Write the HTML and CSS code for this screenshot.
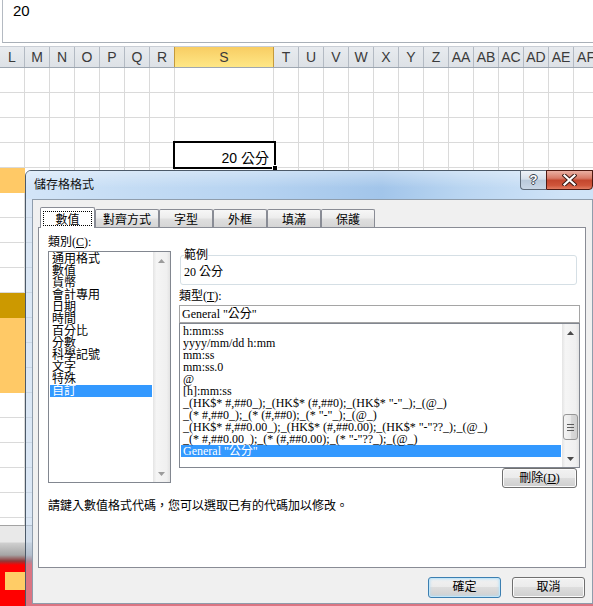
FILE: index.html
```html
<!DOCTYPE html>
<html lang="zh-TW">
<head>
    <meta charset="UTF-8">
    <meta name="viewport" content="width=device-width, initial-scale=1.0">
    <title>儲存格格式</title>
    <link rel="stylesheet" href="styles.css">
</head>
<body>
    <div class="formula-bar">20</div>

    <div class="col-heads">
        <div class="col-head">L</div>
        <div class="col-head">M</div>
        <div class="col-head">N</div>
        <div class="col-head">O</div>
        <div class="col-head">P</div>
        <div class="col-head">Q</div>
        <div class="col-head">R</div>
        <div class="col-head col-head-sel">S</div>
        <div class="col-head">T</div>
        <div class="col-head">U</div>
        <div class="col-head">V</div>
        <div class="col-head">W</div>
        <div class="col-head">X</div>
        <div class="col-head">Y</div>
        <div class="col-head">Z</div>
        <div class="col-head">AA</div>
        <div class="col-head">AB</div>
        <div class="col-head">AC</div>
        <div class="col-head">AD</div>
        <div class="col-head">AE</div>
        <div class="col-head">AF</div>
    </div>

    <div class="grid">
        <div class="col col-first">
            <div class="cell"></div>
            <div class="cell"></div>
            <div class="cell"></div>
            <div class="cell"></div>
            <div class="cell cell-orange"></div>
            <div class="cell"></div>
            <div class="cell"></div>
            <div class="cell"></div>
            <div class="cell"></div>
            <div class="cell cell-gold"></div>
            <div class="cell cell-orange"></div>
            <div class="cell cell-orange"></div>
            <div class="cell cell-orange"></div>
            <div class="cell"></div>
            <div class="cell"></div>
            <div class="cell"></div>
            <div class="cell"></div>
            <div class="cell"></div>
            <div class="cell"></div>
        </div>
        <div class="col"></div>
        <div class="col"></div>
        <div class="col"></div>
        <div class="col"></div>
        <div class="col"></div>
        <div class="col"></div>
        <div class="col col-wide"></div>
        <div class="col"></div>
        <div class="col"></div>
        <div class="col"></div>
        <div class="col"></div>
        <div class="col"></div>
        <div class="col"></div>
        <div class="col"></div>
        <div class="col"></div>
        <div class="col"></div>
        <div class="col"></div>
        <div class="col"></div>
        <div class="col"></div>
        <div class="col"></div>
    </div>

    <div class="sheet-foot">
        <div class="foot-cell"></div>
    </div>

    <div class="active-cell">20 公分<span class="fill-handle"></span></div>

    <div class="dialog">
        <div class="dialog-title">
            <span class="dialog-caption">儲存格格式</span>
            <div class="caption-btns">
                <span class="caption-btn caption-help">?</span>
                <span class="caption-btn caption-close">
                    <svg width="15" height="12" viewBox="0 0 15 12">
                        <path d="M2.5 1.5 L12.5 10.5 M12.5 1.5 L2.5 10.5" stroke="#3b1a14" stroke-width="4.2" stroke-linecap="square"/>
                        <path d="M2.5 1.5 L12.5 10.5 M12.5 1.5 L2.5 10.5" stroke="#fff" stroke-width="2.2" stroke-linecap="square"/>
                    </svg>
                </span>
            </div>
        </div>

        <div class="dialog-body">
            <div class="tabs">
                <div class="tab tab-active"><span class="focus-ring">數值</span></div>
                <div class="tab tab-wide">對齊方式</div>
                <div class="tab">字型</div>
                <div class="tab">外框</div>
                <div class="tab">填滿</div>
                <div class="tab">保護</div>
            </div>

            <div class="panel">
                <div class="panel-cols">
                    <div class="cat-col">
                        <div class="label">類別(<u>C</u>):</div>
                        <div class="listbox cat-list">
                            <ul class="list-items">
                                <li>通用格式</li>
                                <li>數值</li>
                                <li>貨幣</li>
                                <li>會計專用</li>
                                <li>日期</li>
                                <li>時間</li>
                                <li>百分比</li>
                                <li>分數</li>
                                <li>科學記號</li>
                                <li>文字</li>
                                <li>特殊</li>
                                <li class="is-selected">自訂</li>
                            </ul>
                            <div class="scrollbar scrollbar-off">
                                <span class="sb-arrow">
                                    <svg width="7" height="4" viewBox="0 0 7 4"><path d="M0 4 L3.5 0 L7 4z" fill="#9c9c9c"/></svg>
                                </span>
                                <span class="sb-arrow">
                                    <svg width="7" height="4" viewBox="0 0 7 4"><path d="M0 0 L3.5 4 L7 0z" fill="#9c9c9c"/></svg>
                                </span>
                            </div>
                        </div>
                    </div>

                    <div class="type-col">
                        <fieldset class="sample">
                            <legend>範例</legend>
                            <div class="sample-value">20 公分</div>
                        </fieldset>
                        <div class="label label-type">類型(<u>T</u>):</div>
                        <div class="type-input">General "公分"</div>
                        <div class="listbox type-list">
                            <ul class="list-items">
                                <li>h:mm:ss</li>
                                <li>yyyy/mm/dd h:mm</li>
                                <li>mm:ss</li>
                                <li>mm:ss.0</li>
                                <li>@</li>
                                <li>[h]:mm:ss</li>
                                <li>_(HK$* #,##0_);_(HK$* (#,##0);_(HK$* "-"_);_(@_)</li>
                                <li>_(* #,##0_);_(* (#,##0);_(* "-"_);_(@_)</li>
                                <li>_(HK$* #,##0.00_);_(HK$* (#,##0.00);_(HK$* "-"??_);_(@_)</li>
                                <li>_(* #,##0.00_);_(* (#,##0.00);_(* "-"??_);_(@_)</li>
                                <li class="is-selected">General "公分"</li>
                            </ul>
                            <div class="scrollbar">
                                <span class="sb-arrow">
                                    <svg width="7" height="4" viewBox="0 0 7 4"><path d="M0 4 L3.5 0 L7 4z" fill="#4a4a4a"/></svg>
                                </span>
                                <span class="sb-thumb">
                                    <svg width="8" height="7" viewBox="0 0 8 7">
                                        <path d="M0 0.5 H7 M0 3.5 H7 M0 6.5 H7" stroke="#5c5c5c" stroke-width="1"/>
                                    </svg>
                                </span>
                                <span class="sb-arrow">
                                    <svg width="7" height="4" viewBox="0 0 7 4"><path d="M0 0 L3.5 4 L7 0z" fill="#4a4a4a"/></svg>
                                </span>
                            </div>
                        </div>
                        <button class="btn btn-delete">刪除(<u>D</u>)</button>
                    </div>
                </div>
                <p class="hint">請鍵入數值格式代碼，您可以選取已有的代碼加以修改。</p>
            </div>

            <div class="dialog-buttons">
                <button class="btn btn-default">確定</button>
                <button class="btn">取消</button>
            </div>
        </div>
    </div>
</body>
</html>
```

FILE: styles.css
```css
* {
    box-sizing: border-box;
}
body {
    margin: 0;
    width: 593px;
    height: 606px;
    overflow: hidden;
    position: relative;
    background: #fff;
    font-family: "Liberation Sans", "Noto Sans CJK TC", sans-serif;
}

/* sheet */
.formula-bar {
    height: 43px;
    margin-left: 2px;
    padding: 2px 0 0 10px;
    border-left: 1px solid #b4bac2;
    border-bottom: 1px solid #a9b0b8;
    font-size: 15px;
    line-height: 18px;
    color: #000;
}
.col-heads {
    display: flex;
    height: 22px;
    margin-top: 3px;
    overflow: hidden;
    border-top: 1px solid #c9ced5;
    border-bottom: 1px solid #9ea7b1;
    background: linear-gradient(#e8ebef, #dde1e6);
}
.col-head {
    flex: none;
    width: 25px;
    height: 20px;
    border-right: 1px solid #b3bac3;
    text-align: center;
    font-size: 14px;
    line-height: 21px;
    color: #3b3b3b;
}
.col-head-sel {
    width: 99px;
    border-right-color: #c49a3c;
    box-shadow: -1px 0 0 #c49a3c;
    background: linear-gradient(#f8cd63, #fee786);
}
.grid {
    display: flex;
    height: 457px;
    overflow: hidden;
}
.col {
    flex: none;
    width: 25px;
    border-right: 1px solid #dadada;
    background: repeating-linear-gradient(#fff 0 24px, #dadada 24px 25px);
}
.col-wide {
    width: 99px;
}
.col-first {
    border-right: 0;
    background: none;
}
.cell {
    height: 25px;
    border-right: 1px solid #dadada;
    border-bottom: 1px solid #dadada;
}
.cell-orange {
    background: #ffc966;
    border-color: #ffc966;
}
.cell-gold {
    background: #cc9900;
    border-color: #cc9900;
}
.sheet-foot {
    height: 81px;
    padding: 47px 0 0 5px;
    background: linear-gradient(#a3a3a3 0 1px, #e9e9e9 1px 17px, #cfcfcf 18px, #a6a6a6 30px, #8e3a3a 36px, #ff0000 40px);
}
.foot-cell {
    width: 20px;
    height: 18px;
    background: #ffcc66;
}
.active-cell {
    position: absolute;
    left: 173px;
    top: 141px;
    width: 103px;
    height: 28px;
    border: 2px solid #000;
    padding: 6px 5px 0 0;
    background: #fff;
    text-align: right;
    font-size: 14px;
    line-height: 18px;
    color: #000;
}
.fill-handle {
    position: absolute;
    right: -4px;
    bottom: -4px;
    width: 6px;
    height: 6px;
    background: #000;
    border: 1px solid #fff;
}

/* dialog */
.dialog {
    position: absolute;
    left: 25px;
    top: 170px;
    width: 575px;
    height: 441px;
    padding: 0 6px 6px;
    border: 1px solid #4c5a69;
    border-radius: 6px 6px 0 0;
    background: rgba(190, 212, 236, 0.55);
    font-family: "Liberation Serif", "Noto Sans CJK TC", serif;
    font-size: 12px;
    color: #000;
}
.dialog-title {
    display: flex;
    align-items: flex-start;
    height: 28px;
    margin: 0 -6px;
    padding-left: 8px;
    border-radius: 5px 5px 0 0;
    background:
        linear-gradient(rgba(255, 255, 255, 0.35), rgba(255, 255, 255, 0) 60%),
        linear-gradient(90deg, #d3e5f8 0%, #c4dcf4 18%, #b6d3f1 40%, #a2c5ea 62%, #b9d5f1 76%, #cfe3f7 94%);
}
.dialog-caption {
    margin-top: 6px;
    line-height: 14px;
    font-family: "Noto Sans CJK TC", sans-serif;
    color: #111;
}
.caption-btns {
    display: flex;
    margin: -1px 6px 0 auto;
}
.caption-btn {
    display: flex;
    align-items: center;
    justify-content: center;
    height: 20px;
}
.caption-help {
    width: 26px;
    border: 1px solid #5e6b79;
    border-right: 0;
    border-radius: 0 0 0 4px;
    background: linear-gradient(#eef2f7, #d5dfea 45%, #b9c9da 52%, #c9d7e6);
    font: bold 13px/18px "Liberation Sans", sans-serif;
    color: #fff;
    text-shadow: 1px 0 0 #3a4450, -1px 0 0 #3a4450, 0 1px 0 #3a4450, 0 -1px 0 #3a4450;
}
.caption-close {
    width: 47px;
    border: 1px solid #4e1a12;
    border-radius: 0 0 4px 0;
    background: linear-gradient(#eab0a3, #d87b68 40%, #c4472e 52%, #cf553a 80%, #e27d62);
}
.dialog-body {
    height: 405px;
    padding: 7px 7px 0 5px;
    border: 1px solid #8f9dac;
    background: #f0f0f0;
}

/* tabs */
.tabs {
    display: flex;
    align-items: flex-end;
    height: 20px;
    padding-left: 2px;
    position: relative;
    z-index: 1;
    font-family: "Noto Sans CJK TC", sans-serif;
}
.tab {
    height: 18px;
    padding: 0 14px;
    border: 1px solid #898c95;
    border-bottom: 0;
    border-radius: 2px 2px 0 0;
    background: linear-gradient(#f7f7f7, #ededed 45%, #dfdfdf 55%, #d5d5d5);
    line-height: 17px;
}
.tab-wide {
    padding: 0 7px;
}
.tab-active {
    display: flex;
    justify-content: center;
    align-items: flex-start;
    width: 55px;
    height: 21px;
    margin-bottom: -1px;
    padding: 3px 0 0;
    background: #fff;
}
.focus-ring {
    padding: 0 11px;
    border: 1px dotted #000;
    line-height: 13px;
}
.panel {
    width: 548px;
    height: 341px;
    padding: 8px 0 0 9px;
    border: 1px solid #898c95;
    background: #fff;
}
.panel-cols {
    display: flex;
    align-items: flex-start;
    gap: 8px;
}
.cat-col {
    width: 123px;
}
.label {
    line-height: 12px;
}
.listbox {
    display: flex;
    border: 1px solid #828790;
    background: #fff;
}
.cat-list {
    height: 232px;
    margin-top: 3px;
}
.list-items {
    flex: 1;
    min-width: 0;
    margin: 0;
    padding: 1px;
    list-style: none;
    overflow: hidden;
}
.list-items li {
    height: 12px;
    padding-left: 2px;
    line-height: 12px;
    white-space: nowrap;
}
.list-items .is-selected {
    background: #3399ff;
    color: #fff;
}
.scrollbar {
    flex: none;
    display: flex;
    flex-direction: column;
    justify-content: space-between;
    width: 17px;
    background: linear-gradient(90deg, #e4e4e4, #f5f5f5 20%, #f0f0f0 80%, #e3e3e3);
}
.sb-arrow {
    display: flex;
    align-items: center;
    justify-content: center;
    height: 17px;
}
.sb-thumb {
    display: flex;
    align-items: center;
    justify-content: center;
    height: 26px;
    margin: auto 1px 10px;
    border: 1px solid #969696;
    border-radius: 3px;
    background: linear-gradient(90deg, #f4f4f4, #e9e9e9 50%, #dadada 52%, #d0d0d0);
}

.type-col {
    display: flex;
    flex-direction: column;
    width: 401px;
}
.sample {
    min-width: 0;
    margin: 13px 3px 0 1px;
    padding: 5px 3px 6px;
    border: 1px solid #d5dfe5;
    border-radius: 3px;
}
.sample legend {
    padding: 0;
    line-height: 12px;
}
.sample-value {
    line-height: 12px;
}
.label-type {
    margin-top: 5px;
}
.type-input {
    height: 18px;
    margin-top: 3px;
    padding-left: 2px;
    border: 1px solid #a5a5a5;
    line-height: 16px;
}
.type-list {
    height: 145px;
}
.hint {
    margin: 12px 0 0;
    line-height: 12px;
}

/* buttons */
.btn {
    width: 73px;
    height: 21px;
    padding: 0;
    border: 1px solid #707070;
    border-radius: 3px;
    background: linear-gradient(#f2f2f2, #ebebeb 50%, #dddddd 50%, #cfcfcf);
    box-shadow: inset 0 0 0 1px #fbfbfb;
    font: 12px/17px "Liberation Serif", "Noto Sans CJK TC", serif;
    color: #000;
}
.btn-delete {
    align-self: flex-end;
    width: 75px;
    height: 20px;
    margin-right: 3px;
}
.btn-default {
    border-color: #3c7fb1;
    box-shadow: inset 0 0 0 1px #c3e6f8, inset 0 0 3px 1px #b6def5;
}
.dialog-buttons {
    display: flex;
    justify-content: flex-end;
    gap: 11px;
    margin-top: 9px;
}
```
